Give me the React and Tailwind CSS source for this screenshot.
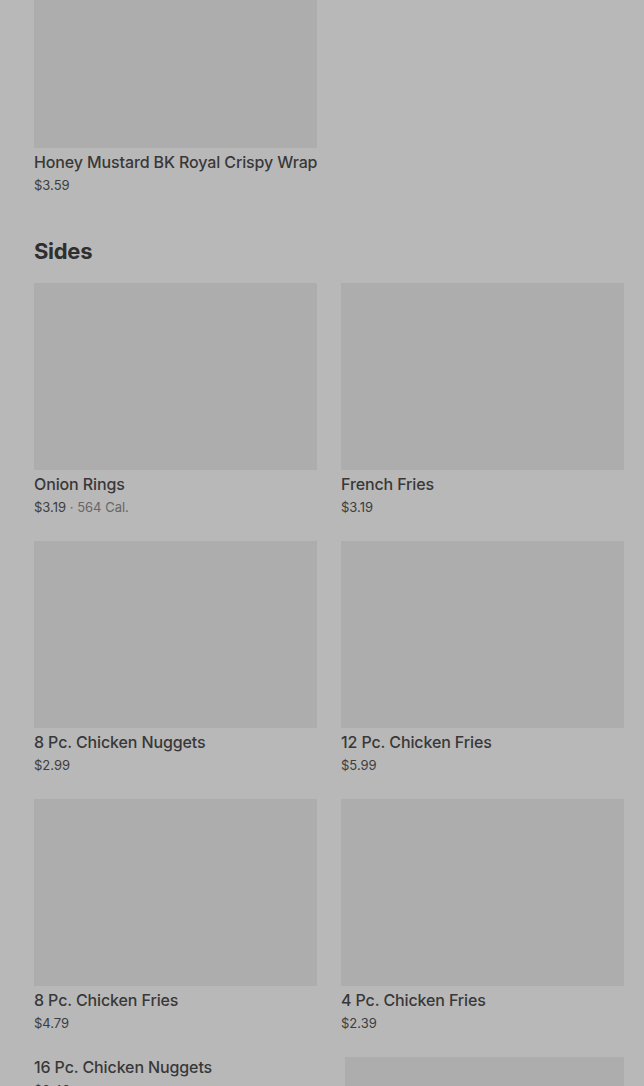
import React from "react";

const sides = [
  { name: "Onion Rings", price: "$3.19", cal: "564 Cal." },
  { name: "French Fries", price: "$3.19" },
  { name: "8 Pc. Chicken Nuggets", price: "$2.99" },
  { name: "12 Pc. Chicken Fries", price: "$5.99" },
  { name: "8 Pc. Chicken Fries", price: "$4.79" },
  { name: "4 Pc. Chicken Fries", price: "$2.39" },
];

const ItemCard = ({ item, imgClass = "h-[187px]" }) => (
  <div className="flex flex-col">
    <div className={`${imgClass} w-full bg-[#adadad]`} />
    <div className="mt-1 text-base leading-5 font-medium tracking-[-0.12px] text-[#383838] whitespace-nowrap">
      {item.name}
    </div>
    <div className="mt-1 text-[13px] leading-[18px] text-[#3d3d3d]">
      {item.price}
      {item.cal && <span className="text-[#666666]"> · {item.cal}</span>}
    </div>
  </div>
);

export default function App() {
  return (
    <div
      className="min-h-screen bg-[#b8b8b8] pl-[34px] pr-[20px] overflow-hidden"
      style={{ fontFamily: "Inter, 'Noto Sans', sans-serif" }}
    >
      {/* previous section, scrolled past */}
      <div className="grid grid-cols-2 gap-x-6">
        <ItemCard
          item={{ name: "Honey Mustard BK Royal Crispy Wrap", price: "$3.59" }}
          imgClass="h-[148px]"
        />
      </div>

      {/* Sides */}
      <h2 className="mt-[43px] text-[22px] leading-7 font-bold text-[#2f2f2f] tracking-[-0.3px]">
        Sides
      </h2>
      <div className="mt-[18px] grid grid-cols-2 gap-x-6 gap-y-[25px]">
        {sides.map((item, idx) => (
          <ItemCard key={idx} item={item} />
        ))}
        <div className="flex flex-col">
          <div className="text-base leading-5 font-medium tracking-[-0.12px] text-[#383838]">16 Pc. Chicken Nuggets</div>
          <div className="mt-1 text-[13px] leading-[18px] text-[#3d3d3d]">$9.49</div>
        </div>
        <div className="h-[187px] ml-1 bg-[#adadad]" />
      </div>
    </div>
  );
}
